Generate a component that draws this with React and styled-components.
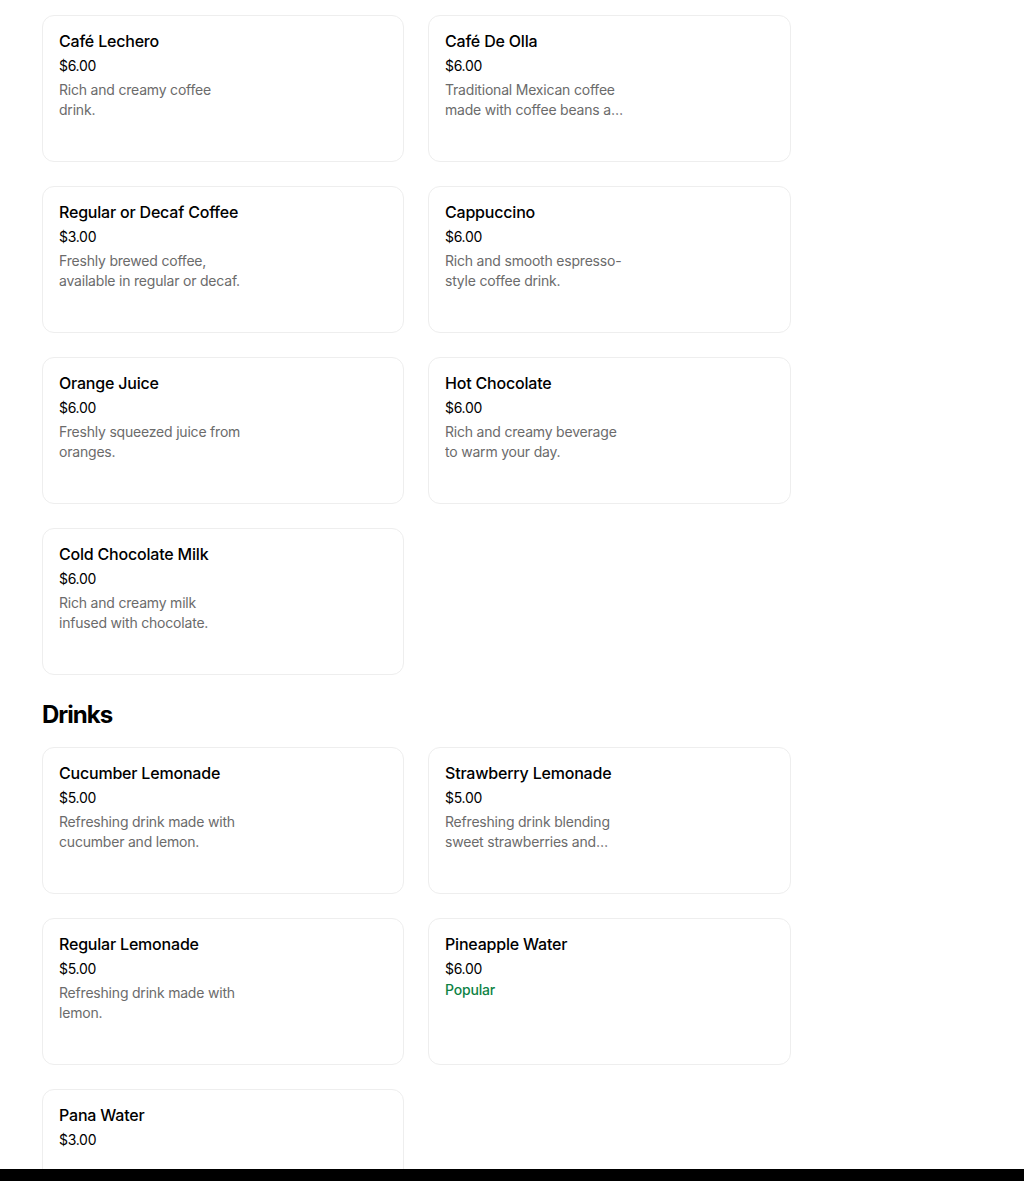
import React from 'react'
import styled, { createGlobalStyle } from 'styled-components'

const GlobalStyle = createGlobalStyle`
    html, body {
        margin: 0;
        padding: 0;
        background: #ffffff;
        overflow: hidden;
    }
    body {
        font-family: Inter, "Liberation Sans", sans-serif;
        color: #000000;
    }
`

const sections = [
    {
        title: null,
        items: [
            { name: 'Café Lechero', price: '$6.00', description: 'Rich and creamy coffee drink.' },
            { name: 'Café De Olla', price: '$6.00', description: 'Traditional Mexican coffee made with coffee beans and cinnamon.' },
            { name: 'Regular or Decaf Coffee', price: '$3.00', description: 'Freshly brewed coffee, available in regular or decaf.' },
            { name: 'Cappuccino', price: '$6.00', description: 'Rich and smooth espresso-style coffee drink.' },
            { name: 'Orange Juice', price: '$6.00', description: 'Freshly squeezed juice from oranges.' },
            { name: 'Hot Chocolate', price: '$6.00', description: 'Rich and creamy beverage to warm your day.' },
            { name: 'Cold Chocolate Milk', price: '$6.00', description: 'Rich and creamy milk infused with chocolate.' },
        ],
    },
    {
        title: 'Drinks',
        items: [
            { name: 'Cucumber Lemonade', price: '$5.00', description: 'Refreshing drink made with cucumber and lemon.' },
            { name: 'Strawberry Lemonade', price: '$5.00', description: 'Refreshing drink blending sweet strawberries and lemon.' },
            { name: 'Regular Lemonade', price: '$5.00', description: 'Refreshing drink made with lemon.' },
            { name: 'Pineapple Water', price: '$6.00', popular: true },
            { name: 'Pana Water', price: '$3.00' },
        ],
    },
]

const Page = styled.div`
    height: 100vh;
    display: flex;
    flex-direction: column;
`

const Content = styled.main`
    flex: 1;
    overflow: hidden;
    padding: 15px 0 0 42px;
`

const Menu = styled.div`
    width: 749px;
    display: flex;
    flex-direction: column;
    gap: 24px;
`

const Section = styled.section`
    display: flex;
    flex-direction: column;
    gap: 16px;
`

const SectionTitle = styled.h2`
    margin: 0;
    font-size: 24px;
    line-height: 32px;
    font-weight: 700;
    letter-spacing: -1px;
`

const Grid = styled.div`
    display: grid;
    grid-template-columns: 362px 363px;
    gap: 24px;
`

const Card = styled.div`
    box-sizing: border-box;
    height: 147px;
    border: 1px solid #eeeeee;
    border-radius: 12px;
    padding: 15px 16px 16px;
    display: flex;
    flex-direction: column;
`

const ItemName = styled.div`
    font-size: 16px;
    line-height: 20px;
    font-weight: 500;
    letter-spacing: -0.2px;
    color: #000000;
`

const Price = styled.div`
    margin-top: 5px;
    font-size: 14px;
    line-height: 20px;
    letter-spacing: -0.3px;
    color: #000000;
`

const Description = styled.div`
    margin-top: 4px;
    max-width: 184px;
    font-size: 14px;
    line-height: 20px;
    letter-spacing: -0.2px;
    color: #6b6b6b;
    display: -webkit-box;
    -webkit-line-clamp: 2;
    -webkit-box-orient: vertical;
    overflow: hidden;
`

const Popular = styled.div`
    margin-top: 1px;
    font-size: 14px;
    line-height: 20px;
    font-weight: 500;
    letter-spacing: -0.2px;
    color: #0e8345;
`

const BottomBar = styled.div`
    height: 12px;
    flex-shrink: 0;
    background: #000000;
`

const MenuCard = ({ item }) => (
    <Card>
        <ItemName>{item.name}</ItemName>
        <Price>{item.price}</Price>
        {item.popular && <Popular>Popular</Popular>}
        {item.description && <Description>{item.description}</Description>}
    </Card>
)

const App = () => {
    return (
        <Page>
            <GlobalStyle />
            <Content>
                <Menu>
                    {sections.map((section, i) => (
                        <Section key={i}>
                            {section.title && <SectionTitle>{section.title}</SectionTitle>}
                            <Grid>
                                {section.items.map((item) => (
                                    <MenuCard key={item.name} item={item} />
                                ))}
                            </Grid>
                        </Section>
                    ))}
                </Menu>
            </Content>
            <BottomBar />
        </Page>
    )
}

export default App
